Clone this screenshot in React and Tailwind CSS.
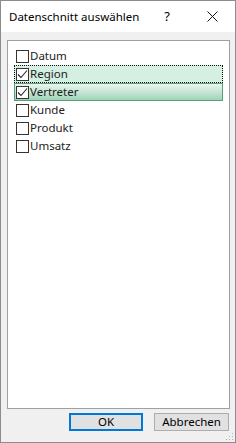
import React from 'react'

const items = [
  { label: 'Datum', checked: false },
  { label: 'Region', checked: true, state: 'focus' },
  { label: 'Vertreter', checked: true, state: 'hot' },
  { label: 'Kunde', checked: false },
  { label: 'Produkt', checked: false },
  { label: 'Umsatz', checked: false },
]

function CheckBox({ checked }) {
  return (
    <span className="w-[13px] h-[13px] border border-[#333333] bg-white flex items-center justify-center shrink-0">
      {checked && (
        <svg width="11" height="11" viewBox="0 0 11 11">
          <path d="M1 5.5 L4 8.5 L10 1.5" fill="none" stroke="#222" strokeWidth="1.1" />
        </svg>
      )}
    </span>
  )
}

function Row({ item }) {
  // row styles for the keyboard focus and the hovered item
  let cls = 'border border-transparent'
  if (item.state === 'focus') cls = 'border border-dotted border-[#111] bg-[#d5f0e2]'
  if (item.state === 'hot') cls = 'border border-[#5a9f7b] bg-gradient-to-b from-[#eaf7f0] to-[#9fd4b8]'
  return (
    <div className={`h-[18px] flex items-center gap-[1px] pl-[1px] ${cls}`}>
      <CheckBox checked={item.checked} />
      <span className="text-[11.5px] text-[#222] leading-none">{item.label}</span>
    </div>
  )
}

export default function App() {
  return (
    <div
      className="w-[236px] h-[443px] border border-[#8c8c8c] bg-[#f0f0f0] flex flex-col"
      style={{ fontFamily: '"Noto Sans", "Open Sans", sans-serif' }}
    >
      {/* Title bar */}
      <div className="h-[31px] bg-white flex items-center shrink-0">
        <span className="ml-[8px] text-[11.5px] text-black flex-1">Datenschnitt auswählen</span>
        <span className="text-[13px] text-black mr-[37px]">?</span>
        <svg width="11" height="11" viewBox="0 0 11 11" className="mr-[17px]">
          <path d="M0.5 0.5 L10.5 10.5 M10.5 0.5 L0.5 10.5" stroke="#111" strokeWidth="1" />
        </svg>
      </div>

      {/* List box */}
      <div className="mt-[8px] ml-[6px] w-[223px] h-[369px] border border-[#a0a0a0] bg-white pt-[6px] pl-[6px] pr-[6px]">
        {items.map((item) => (
          <Row key={item.label} item={item} />
        ))}
      </div>

      {/* Buttons */}
      <div className="mt-[4px] flex items-start relative flex-1">
        <button className="ml-[68px] w-[74px] h-[18px] border-2 border-[#0078d7] bg-[#e1e1e1] text-[11.5px] text-black leading-none">
          OK
        </button>
        <button className="ml-[11px] w-[75px] h-[18px] border border-[#adadad] bg-[#e1e1e1] text-[11.5px] text-black leading-none">
          Abbrechen
        </button>
        <svg width="8" height="8" viewBox="0 0 8 8" className="absolute right-[1px] bottom-[1px]">
          <rect x="6" y="0" width="1" height="1" fill="#b0b0b0" />
          <rect x="3" y="3" width="1" height="1" fill="#b0b0b0" />
          <rect x="6" y="3" width="1" height="1" fill="#b0b0b0" />
          <rect x="0" y="6" width="1" height="1" fill="#b0b0b0" />
          <rect x="3" y="6" width="1" height="1" fill="#b0b0b0" />
          <rect x="6" y="6" width="1" height="1" fill="#b0b0b0" />
        </svg>
      </div>
    </div>
  )
}
